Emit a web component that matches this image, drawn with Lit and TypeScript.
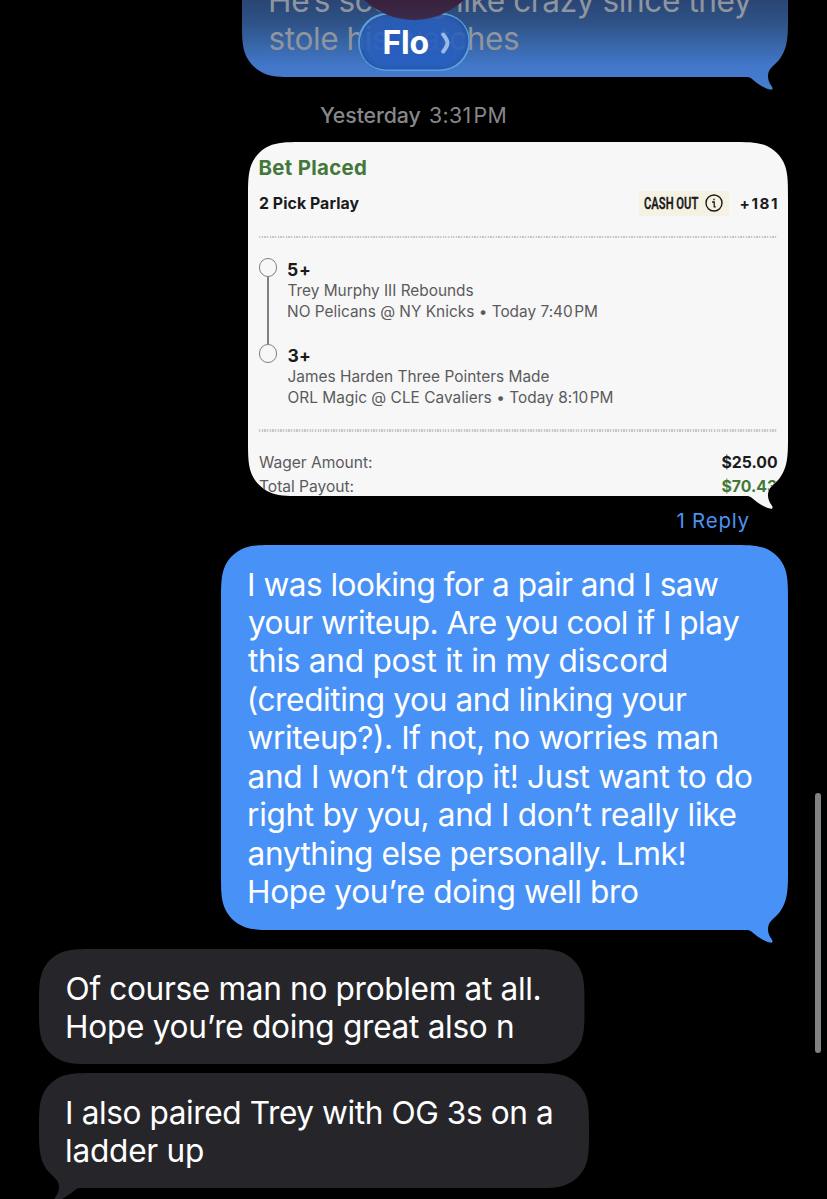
import { LitElement, html, css, svg, nothing } from "lit";
import { customElement, property } from "lit/decorators.js";
import { styleMap } from "lit/directives/style-map.js";

const FAMILY = 'Inter, "Liberation Sans", sans-serif';
const measurer = document.createElement("canvas").getContext("2d")!;

/** One line of text whose tracking is derived from its target ink width. */
@customElement("fit-line")
class FitLine extends LitElement {
  @property() text = "";
  @property({ type: Number }) width = 0;
  @property({ type: Number }) size = 16;
  @property({ type: Number }) weight = 400;
  @property({ type: Number }) leading = 20;

  static styles = css`
    :host { display: block; flex: none; }
    .line { display: block; white-space: pre; }
  `;

  render() {
    measurer.font = `${this.weight} ${this.size}px ${FAMILY}`;
    const m = measurer.measureText(this.text);
    const indent = m.actualBoundingBoxLeft * 0.45;
    const inkEnd = indent + m.actualBoundingBoxRight;
    const tracking = (this.width - inkEnd) / Math.max(1, this.text.length - 1);
    return html`<span class="line" style=${styleMap({
      width: `${this.width}px`,
      fontFamily: FAMILY,
      fontSize: `${this.size}px`,
      fontWeight: `${this.weight}`,
      lineHeight: `${this.leading}px`,
      letterSpacing: `${tracking.toFixed(3)}px`,
      textIndent: `${indent.toFixed(2)}px`,
    })}>${this.text}</span>`;
  }
}

type Tail = "left" | "right" | "none";

/** Outline of a message bubble with continuous corners and an optional tail. */
function outline(w: number, h: number, tail: Tail, r = 38): string {
  const a = 1.528665 * r, b = 1.08849 * r, c = 0.86841 * r, d = 0.63149 * r;
  const e = 0.07491 * r, f = 0.37282 * r, g = 0.16906 * r;
  const flip = tail === "left";
  const p = (x: number, y: number) => `${(flip ? w - x : x).toFixed(2)} ${y.toFixed(2)}`;
  const parts = [
    `M${p(a, 0)}`,
    `L${p(w - a, 0)}`,
    `C${p(w - b, 0)} ${p(w - c, 0)} ${p(w - d, e)}`,
    `C${p(w - f, g)} ${p(w - g, f)} ${p(w - e, d)}`,
    `C${p(w, c)} ${p(w, b)} ${p(w, a)}`,
  ];
  if (tail === "none") {
    parts.push(
      `L${p(w, h - a)}`,
      `C${p(w, h - b)} ${p(w, h - c)} ${p(w - e, h - d)}`,
      `C${p(w - g, h - f)} ${p(w - f, h - g)} ${p(w - d, h - e)}`,
      `C${p(w - c, h)} ${p(w - b, h)} ${p(w - a, h)}`,
    );
  } else {
    parts.push(
      `L${p(w, h - 56)}`,
      `C${p(w, h - 36)} ${p(w - 1.5, h - 27)} ${p(w - 9, h - 17)}`,
      `C${p(w - 13, h - 12)} ${p(w - 20, h - 9)} ${p(w - 20, h - 1)}`,
      `C${p(w - 20, h + 5)} ${p(w - 17, h + 8)} ${p(w - 15.8, h + 10)}`,
      `C${p(w - 15, h + 12)} ${p(w - 15.6, h + 13)} ${p(w - 18, h + 12.6)}`,
      `C${p(w - 25, h + 11)} ${p(w - 31, h + 6)} ${p(w - 36, h + 2)}`,
      `C${p(w - 38, h + 0.5)} ${p(w - 39, h)} ${p(w - 42, h)}`,
    );
  }
  parts.push(
    `L${p(a, h)}`,
    `C${p(b, h)} ${p(c, h)} ${p(d, h - e)}`,
    `C${p(f, h - g)} ${p(g, h - f)} ${p(e, h - d)}`,
    `C${p(0, h - c)} ${p(0, h - b)} ${p(0, h - a)}`,
    `L${p(0, a)}`,
    `C${p(0, b)} ${p(0, c)} ${p(e, d)}`,
    `C${p(g, f)} ${p(f, g)} ${p(d, e)}`,
    `C${p(c, 0)} ${p(b, 0)} ${p(a, 0)}Z`,
  );
  return parts.join("");
}

@customElement("chat-bubble")
class ChatBubble extends LitElement {
  @property({ type: Number }) width = 100;
  @property({ type: Number }) height = 100;
  @property() tail: Tail = "none";

  static styles = css`
    :host { display: block; flex: none; }
    .shape { background: var(--fill, #26262a); box-sizing: border-box; overflow: hidden; }
  `;

  render() {
    const extra = this.tail === "none" ? 0 : 14;
    return html`<div class="shape" style=${styleMap({
      width: `${this.width}px`,
      height: `${this.height + extra}px`,
      marginBottom: `${-extra}px`,
      clipPath: `path("${outline(this.width, this.height, this.tail)}")`,
    })}><slot></slot></div>`;
  }
}

interface Leg { goal: string; goalWidth: number; lines: [string, number][]; }

const LEGS: Leg[] = [
  { goal: "5+", goalWidth: 22.5, lines: [["Trey Murphy III Rebounds", 186], ["NO Pelicans @ NY Knicks • Today 7:40\u200aPM", 309.5]] },
  { goal: "3+", goalWidth: 22.5, lines: [["James Harden Three Pointers Made", 262], ["ORL Magic @ CLE Cavaliers • Today 8:10\u200aPM", 325]] },
];

@customElement("bet-slip")
class BetSlip extends LitElement {
  static styles = css`
    :host { display: flex; flex-direction: column; padding: 13px 11px 0 11px; color: #1b1b1d; }
    .title { color: #43783a; }
    .summary { display: flex; align-items: center; height: 25px; margin-top: 10.5px; }
    .tag { display: flex; align-items: center; justify-content: space-between; box-sizing: border-box;
      width: 90px; height: 25px; margin: 0 11px 0 auto; padding: 0 6.5px 0 4.5px; background: #f5f2e4; }
    .cash { width: 55px; font: 600 16px/25px Roboto, sans-serif; white-space: nowrap; }
    .cash span { display: inline-block; transform: scaleX(0.7); transform-origin: 0 50%; -webkit-text-stroke: 0.3px #1b1b1d; }
    .info { display: block; flex: none; }
    .rule { height: 2.5px; flex: none; background: repeating-linear-gradient(90deg, #c8c8c8 0 1.3px, #ececec 1.3px 2.66px); }
    .rule.first { margin: 20px 0 20px; }
    .rule.second { margin: 21px 0 19px; }
    .leg { display: flex; gap: 10.5px; height: 64px; color: #5b5b5d; }
    .leg.linked { height: 86px; }
    .rail { display: flex; flex-direction: column; align-items: center; width: 18px; }
    .dot { box-sizing: border-box; width: 18.5px; height: 18.5px; border: 1.5px solid #808080; border-radius: 50%; flex: none; }
    .link { width: 1.5px; flex: 1; background: #808080; }
    .goal { color: #1b1b1d; padding-top: 1px; margin-bottom: -1px; }
    .money { display: flex; justify-content: space-between; height: 24px; color: #5b5b5d; }
    .value { color: #1b1b1d; }
    .value.win { color: #43783a; }
  `;

  render() {
    return html`
      <fit-line class="title" text="Bet Placed" width="107" size="20.4" weight="650" leading="25"></fit-line>
      <div class="summary">
        <fit-line text="2 Pick Parlay" width="100.5" size="15.8" weight="650" leading="25"></fit-line>
        <div class="tag">
          <div class="cash"><span>CASH OUT</span></div>
          <svg class="info" width="18" height="18" viewBox="0 0 18 18" fill="none" stroke="#1b1b1d">
            ${svg`<circle cx="9" cy="9" r="8" stroke-width="1.4"/><path d="M7 8h2.2v4.8h1.6" stroke-width="1.3"/><path d="M8.3 5.5h1.4" stroke-width="1.4"/>`}
          </svg>
        </div>
        <fit-line text="+181" width="37" size="15.2" weight="650" leading="25"></fit-line>
      </div>
      <div class="rule first"></div>
      ${LEGS.map((leg, i) => html`
        <div class="leg ${i === 0 ? "linked" : ""}">
          <div class="rail"><div class="dot"></div>${i === 0 ? html`<div class="link"></div>` : nothing}</div>
          <div>
            <fit-line class="goal" .text=${leg.goal} .width=${leg.goalWidth} size="17.5" weight="650" leading="22"></fit-line>
            ${leg.lines.map(([t, w]) => html`<fit-line .text=${t} .width=${w} size="15.4" leading="21"></fit-line>`)}
          </div>
        </div>`)}
      <div class="rule second"></div>
      <div class="money">
        <fit-line text="Wager Amount:" width="113" size="15.6" leading="24"></fit-line>
        <fit-line class="value" text="$25.00" width="55.5" size="15.8" weight="650" leading="24"></fit-line>
      </div>
      <div class="money">
        <fit-line text="Total Payout:" width="94.5" size="15.6" leading="24"></fit-line>
        <fit-line class="value win" text="$70.43" width="55.5" size="15.8" weight="650" leading="24"></fit-line>
      </div>`;
  }
}

const QUESTION: [string, number][] = [
  ["I was looking for a pair and I saw", 470],
  ["your writeup. Are you cool if I play", 491],
  ["this and post it in my discord", 418],
  ["(crediting you and linking your", 439],
  ["writeup?). If not, no worries man", 469.5],
  ["and I won’t drop it! Just want to do", 504],
  ["right by you, and I don’t really like", 487.5],
  ["anything else personally. Lmk!", 436.5],
  ["Hope you’re doing well bro", 390],
];

@customElement("app-root")
class AppRoot extends LitElement {
  static styles = css`
    :host { display: block; position: relative; width: 827px; height: 1199px; overflow: hidden; background: #000; }
    .thread { display: flex; flex-direction: column; padding: 0 39px; }
    .sent { align-self: flex-end; color: #fff; --fill: #4892f7; }
    .received { align-self: flex-start; color: #fff; --fill: #26262a; }
    .body { padding: 20.5px 0 0 27px; }
    .faded { margin-top: -60px; color: #8f959f;
      --fill: linear-gradient(180deg, #2a4573 60px, #2e5286 82px, #3866a8 105px, #4276c8 125px, #467fd0 150px); }
    .faded .body { padding-top: 42px; }
    .stamp { display: flex; gap: 9px; margin: 24px 0 0 281px; color: #87878b; height: 28px; }
    .slip { margin-top: 13px; --fill: #f7f7f7; }
    .reply { align-self: flex-end; margin: 11px 39.5px 0 0; color: #4a93f0; }
    .question { margin-top: 11px; }
    .answer { margin-top: 19px; }
    .followup { margin-top: 9px; }
    .contact { position: absolute; left: 358px; top: 13px; width: 112px; height: 58px; box-sizing: border-box;
      display: flex; align-items: center; padding: 1px 0 0 25.5px; gap: 12px; border-radius: 29px; color: #fff;
      background: radial-gradient(ellipse at 50% 60%, rgba(38, 93, 190, 0.9) 40%, rgba(48, 98, 176, 0.8) 100%);
      box-shadow: inset 1px 1px 0 0.8px #5aa0dc, inset -1px -1px 0 0.6px #5aa0dc, inset 0 0 4px 3px rgba(20, 60, 130, 0.3); }
    .avatar { position: absolute; left: 342px; top: -124px; width: 144px; height: 144px; border-radius: 50%;
      background: linear-gradient(180deg, #38213c 86%, #3d2b4c 100%); }
    .scrollbar { position: absolute; right: 6px; top: 793px; width: 6px; height: 260px; border-radius: 3px; background: #818181; }
  `;

  render() {
    const body = (lines: [string, number][]) => html`<div class="body">${lines.map(
      ([t, w]) => html`<fit-line .text=${t} .width=${w} size="31.6" weight="380" leading="38.45"></fit-line>`)}</div>`;
    return html`
      <div class="thread">
        <chat-bubble class="sent faded" width="546" height="137" tail="right">
          ${body([["He’s scoring like crazy since they", 482], ["stole his watches", 250]])}
        </chat-bubble>
        <div class="stamp">
          <fit-line text="Yesterday" width="100.5" size="21.3" weight="450" leading="28"></fit-line>
          <fit-line text=${"3:31\u200aPM"} width="76" size="21.3" leading="28"></fit-line>
        </div>
        <chat-bubble class="sent slip" width="540" height="354" tail="right"><bet-slip></bet-slip></chat-bubble>
        <fit-line class="reply" text="1 Reply" width="72" size="20.5" weight="430" leading="27"></fit-line>
        <chat-bubble class="sent question" width="567" height="385" tail="right">${body(QUESTION)}</chat-bubble>
        <chat-bubble class="received answer" width="545.5" height="115">
          ${body([["Of course man no problem at all.", 473.5], ["Hope you’re doing great also n", 447]])}
        </chat-bubble>
        <chat-bubble class="received followup" width="550" height="115" tail="left">
          ${body([["I also paired Trey with OG 3s on a", 486], ["ladder up", 137]])}
        </chat-bubble>
      </div>
      <div class="contact">
        <fit-line text="Flo" width="45" size="32" weight="700" leading="40"></fit-line>
        <svg width="9" height="22" viewBox="0 0 9 22" fill="none" stroke="#9db9e6" stroke-width="4" stroke-linecap="round" stroke-linejoin="round">
          <path d="M2.2 2.5Q6.5 8 6.5 11T2.2 19.5"/>
        </svg>
      </div>
      <div class="avatar"></div>
      <div class="scrollbar"></div>`;
  }
}
